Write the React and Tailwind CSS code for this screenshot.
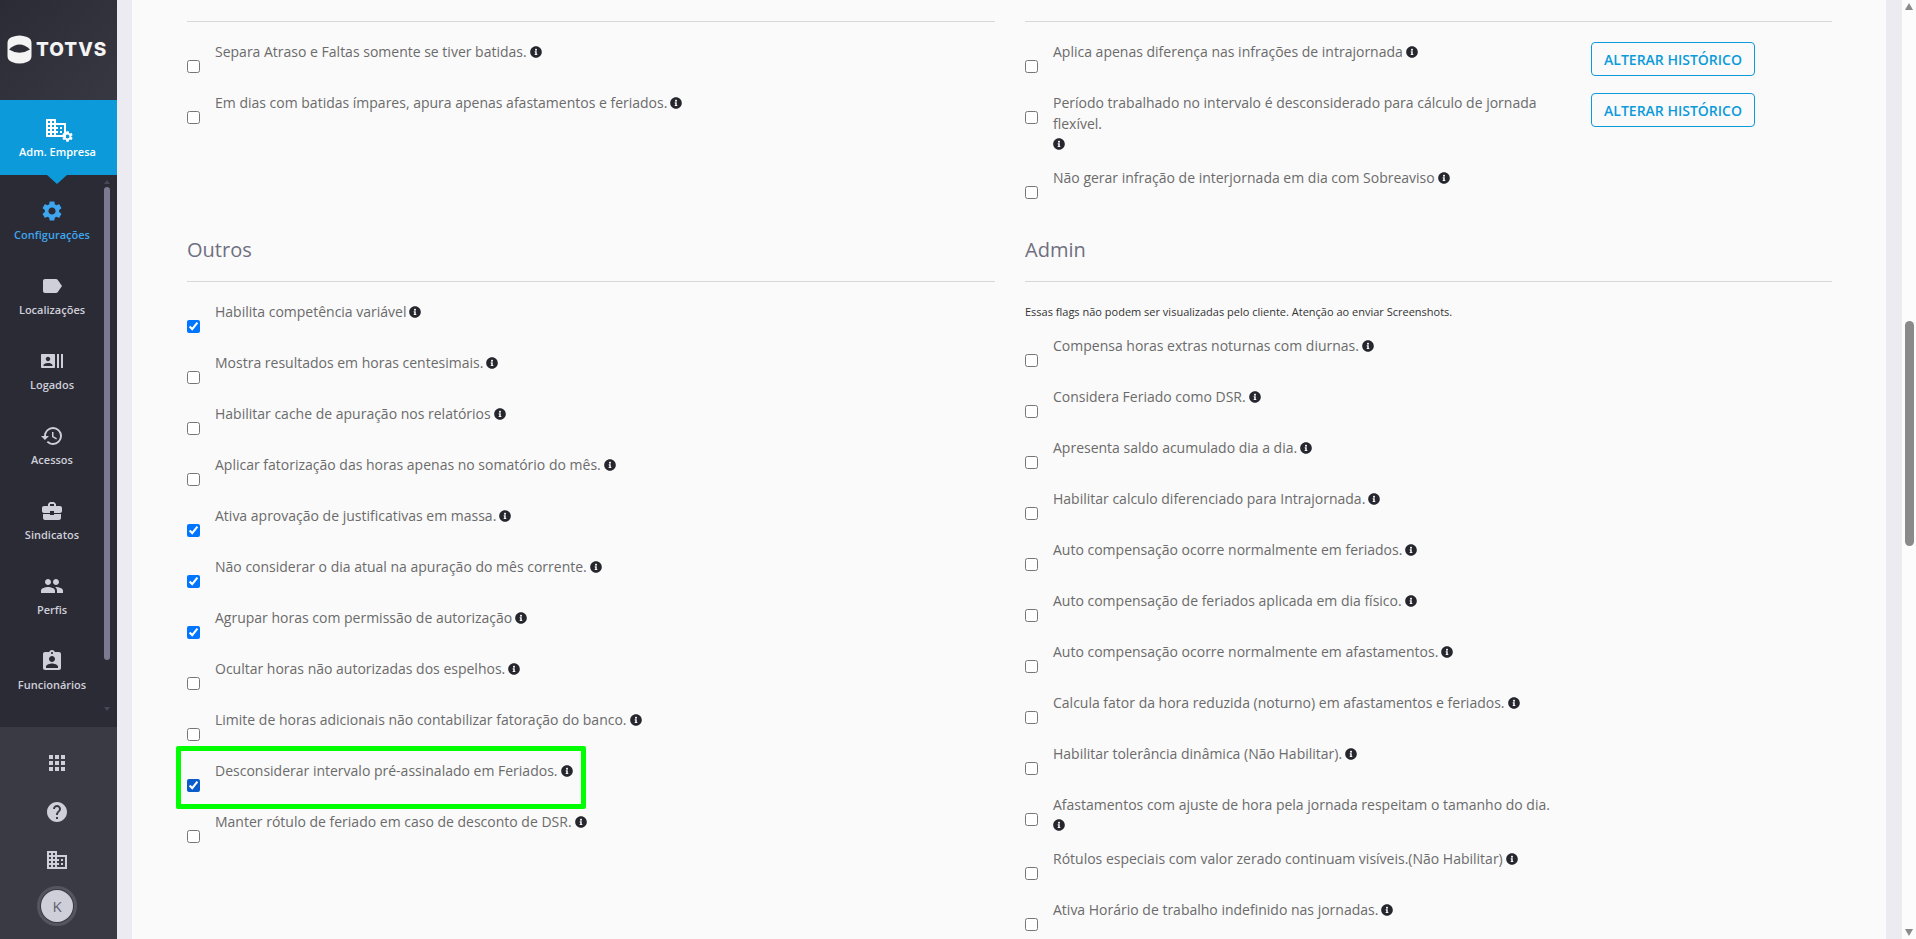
import React from 'react';
import { FaInfoCircle } from 'react-icons/fa';
import {
  MdSettings, MdLabel, MdRecentActors, MdHistory, MdBusinessCenter, MdPeople,
  MdAssignmentInd, MdApps, MdHelp, MdBusiness, MdDomain,
} from 'react-icons/md';

const navItems = [
  { label: 'Configurações', icon: MdSettings, active: true },
  { label: 'Localizações', icon: MdLabel },
  { label: 'Logados', icon: MdRecentActors },
  { label: 'Acessos', icon: MdHistory },
  { label: 'Sindicatos', icon: MdBusinessCenter },
  { label: 'Perfis', icon: MdPeople },
  { label: 'Funcionários', icon: MdAssignmentInd },
];

const topLeft = [
  { text: 'Separa Atraso e Faltas somente se tiver batidas.' },
  { text: 'Em dias com batidas ímpares, apura apenas afastamentos e feriados.' },
];

const outros = [
  { text: 'Habilita competência variável', checked: true },
  { text: 'Mostra resultados em horas centesimais.' },
  { text: 'Habilitar cache de apuração nos relatórios' },
  { text: 'Aplicar fatorização das horas apenas no somatório do mês.' },
  { text: 'Ativa aprovação de justificativas em massa.', checked: true },
  { text: 'Não considerar o dia atual na apuração do mês corrente.', checked: true },
  { text: 'Agrupar horas com permissão de autorização', checked: true },
  { text: 'Ocultar horas não autorizadas dos espelhos.' },
  { text: 'Limite de horas adicionais não contabilizar fatoração do banco.' },
  { text: 'Desconsiderar intervalo pré-assinalado em Feriados.', checked: true, marked: true },
  { text: 'Manter rótulo de feriado em caso de desconto de DSR.' },
];

const admin = [
  { text: 'Compensa horas extras noturnas com diurnas.' },
  { text: 'Considera Feriado como DSR.' },
  { text: 'Apresenta saldo acumulado dia a dia.' },
  { text: 'Habilitar calculo diferenciado para Intrajornada.' },
  { text: 'Auto compensação ocorre normalmente em feriados.' },
  { text: 'Auto compensação de feriados aplicada em dia físico.' },
  { text: 'Auto compensação ocorre normalmente em afastamentos.' },
  { text: 'Calcula fator da hora reduzida (noturno) em afastamentos e feriados.' },
  { text: 'Habilitar tolerância dinâmica (Não Habilitar).' },
  { text: 'Afastamentos com ajuste de hora pela jornada respeitam o tamanho do dia.', iconBelow: true },
  { text: 'Rótulos especiais com valor zerado continuam visíveis.(Não Habilitar)' },
  { text: 'Ativa Horário de trabalho indefinido nas jornadas.' },
];

const Info = () => <FaInfoCircle size={12} className="inline-block ml-[3px] align-[-1px] text-[#26262e]" />;

const Flag = ({ text, checked, marked, iconBelow, button }) => (
  <div className="relative flex items-start min-h-[51px] pb-[13px]">
    <input
      type="checkbox"
      defaultChecked={checked}
      className={`w-[13px] h-[13px] mt-[18px] ml-0 mr-[15px] shrink-0 ${marked ? 'accent-[#0b5ccb]' : 'accent-[#0075ff]'}`}
    />
    <div className={`text-[14px] leading-[20.5px] text-[#6b6b6b] ${button ? 'w-[500px]' : ''}`}>
      {text}
      {iconBelow ? <div className="-ml-[3px]"><Info /></div> : <Info />}
    </div>
    {button && (
      <button className="ml-[38px] h-[34px] w-[164px] shrink-0 rounded-[4px] border border-[#0c9adb] text-[14px] font-semibold text-[#0c9adb]">
        ALTERAR HISTÓRICO
      </button>
    )}
    {marked && (
      <div className="absolute left-[-11px] top-[-15px] w-[410px] h-[63px] border-[5px] border-[#00ff00] rounded-[2px]" />
    )}
  </div>
);

const Heading = ({ children }) => (
  <div className="mt-[17px]">
    <h2 className="text-[20px] leading-[27px] font-normal text-[#6f6f80]">{children}</h2>
    <div className="h-px bg-[#d8d8d8] mt-[18px] mb-[20px]" />
  </div>
);

const App = () => {
  return (
    <div className="flex h-screen overflow-hidden bg-[#ebebf1] font-['Open_Sans',sans-serif]">
      <aside className="relative flex flex-col w-[117px] shrink-0 bg-[#2b2b35]">
        <div className="flex items-center h-[100px] shrink-0 pl-[7px] pb-[2px] bg-gradient-to-br from-[#2b2b35] to-[#383842]">
          <svg width="25" height="29" viewBox="0 0 25 29" className="shrink-0">
            <path d="M5 2 Q12.5 -1 20 2 Q24.5 3.5 24.5 8 V21 Q24.5 25.5 20 27 Q12.5 30 5 27 Q0.5 25.5 0.5 21 V8 Q0.5 3.5 5 2 Z" fill="#f4f4f4" />
            <path d="M2 14.5 Q12.5 4.5 23 14.5 Q12.5 21 2 14.5 Z" fill="#2e2e38" />
          </svg>
          <span className="ml-[4px] text-[19px] leading-none font-extrabold tracking-[1px] text-[#f4f4f4] font-['Inter',sans-serif]">TOTVS</span>
        </div>

        <div className="relative flex flex-col items-center h-[75px] shrink-0 pt-[16px] bg-[#0c9adb] text-white">
          <div className="relative w-[24px] h-[24px] -ml-[5px]">
            <MdDomain size={24} className="text-white" />
            <MdSettings size={13} className="absolute -right-[6px] -bottom-[3px] text-white" />
          </div>
          <span className="mt-[4px] -ml-[2px] text-[11px] font-semibold leading-[15px]">Adm. Empresa</span>
          <div className="absolute left-[47px] top-[75px] w-0 h-0 border-x-[10px] border-x-transparent border-t-[9px] border-t-[#0c9adb]" />
        </div>

        <div className="flex flex-1 min-h-0 overflow-hidden">
          <nav className="flex flex-col w-[104px] shrink-0 pt-[24px]">
            {navItems.map(({ label, icon: Icon, active }) => (
              <div key={label} className={`flex flex-col items-center h-[75px] shrink-0 ${active ? 'text-[#3ea6ee]' : 'text-[#cfcfda]'}`}>
                <Icon size={24} />
                <span className="mt-[4px] text-[11px] font-semibold leading-[15px]">{label}</span>
              </div>
            ))}
          </nav>
          <div className="flex flex-col items-center w-[6px] pt-[5px]">
            <div className="w-0 h-0 border-x-[3px] border-x-transparent border-b-[4px] border-b-[#47475a]" />
            <div className="w-[6px] h-[473px] mt-[3px] rounded-full bg-[#7a7a90]" />
            <div className="w-0 h-0 mt-[47px] border-x-[3px] border-x-transparent border-t-[4px] border-t-[#47475a]" />
          </div>
        </div>

        <div className="flex flex-col items-center h-[212px] shrink-0 pt-[24px] pr-[3px] bg-[#3a3a44] text-[#cfcfda]">
          <MdApps size={24} />
          <MdHelp size={24} className="mt-[25px]" />
          <MdBusiness size={24} className="mt-[24px]" />
          <div className="flex items-center justify-center w-[40px] h-[40px] mt-[14px] rounded-full border-[3px] border-[#55555f]">
            <div className="flex items-center justify-center w-[32px] h-[32px] rounded-full bg-[#cfcfda] text-[15px] text-[#5f5f70]">K</div>
          </div>
        </div>
      </aside>

      <div className="flex-1 min-w-0 pl-[15px] pr-[16px]">
        <main className="h-full bg-[#fafafa] pl-[55px] pr-[54px] pt-[21px]">
          <div className="grid grid-cols-[808px_807px] gap-x-[30px]">
            <div>
              <div className="h-px bg-[#d8d8d8] mb-[20px]" />
              {topLeft.map((f) => <Flag key={f.text} {...f} />)}
            </div>
            <div>
              <div className="h-px bg-[#d8d8d8] mb-[20px]" />
              <Flag text="Aplica apenas diferença nas infrações de intrajornada" button />
              <Flag text="Período trabalhado no intervalo é desconsiderado para cálculo de jornada flexível." iconBelow button />
              <Flag text="Não gerar infração de interjornada em dia com Sobreaviso" />
            </div>
            <div>
              <Heading>Outros</Heading>
              {outros.map((f) => <Flag key={f.text} {...f} />)}
            </div>
            <div>
              <Heading>Admin</Heading>
              <p className="text-[11px] leading-[20px] mb-[14px] text-[#333333]">
                Essas flags não podem ser visualizadas pelo cliente. Atenção ao enviar Screenshots.
              </p>
              {admin.map((f) => <Flag key={f.text} {...f} />)}
            </div>
          </div>
        </main>
      </div>

      <div className="flex flex-col items-center w-[14px] shrink-0 bg-[#fcfcfc]">
        <div className="w-0 h-0 mt-[3px] border-x-[4.5px] border-x-transparent border-b-[7px] border-b-[#8a8a8a]" />
        <div className="w-[9px] h-[225px] mt-[311px] rounded-full bg-[#8a8a8a]" />
        <div className="w-0 h-0 mt-auto mb-[3px] border-x-[4.5px] border-x-transparent border-t-[7px] border-t-[#8a8a8a]" />
      </div>
    </div>
  );
};

export default App;
